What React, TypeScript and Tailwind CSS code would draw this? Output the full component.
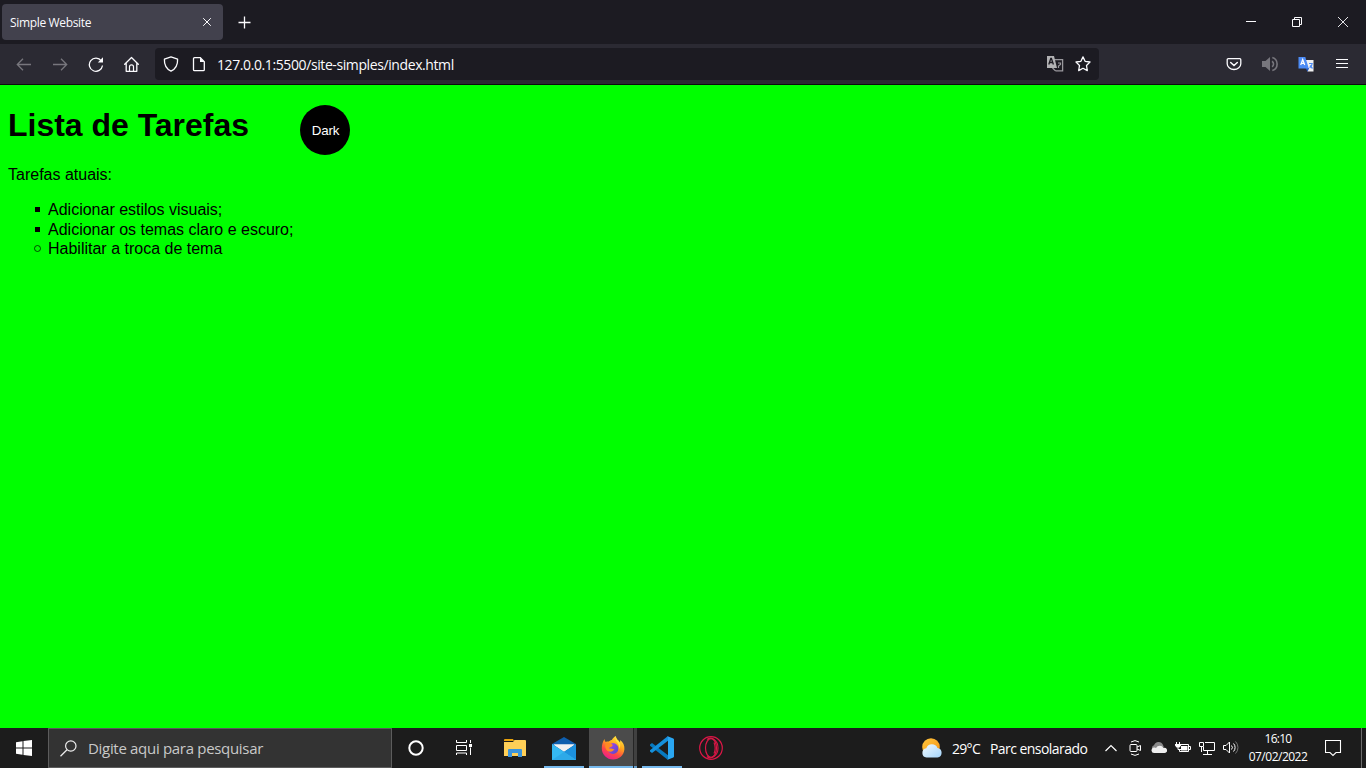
import type { ReactNode } from "react";

const UI = "font-['Open_Sans','Noto_Sans',sans-serif]";

function Icon({ w = 16, h = 16, children, className = "" }: { w?: number; h?: number; children: ReactNode; className?: string }) {
  return (
    <svg width={w} height={h} viewBox={`0 0 ${w} ${h}`} fill="none" stroke="currentColor" className={`shrink-0 ${className}`}>
      {children}
    </svg>
  );
}

function ToolButton({ label, dim, children }: { label: string; dim?: boolean; children: ReactNode }) {
  return (
    <button aria-label={label} className={`flex h-10 w-9 items-center justify-center ${dim ? "text-[#77767d]" : "text-[#fbfbfe]"}`}>
      {children}
    </button>
  );
}

function TabStrip() {
  return (
    <div className="flex h-11 bg-[#1c1b22] text-[#fbfbfe]">
      <div className="mt-1 ml-0.5 flex h-9 w-[221px] items-center justify-between rounded bg-[#42414d] pr-[11px] pl-2">
        <span className="pt-0.5 text-[12px] tracking-[-0.34px] whitespace-nowrap">Simple Website</span>
        <Icon w={10} h={10}><path d="M1.200 1.200l7.600 7.600M8.800 1.200l-7.600 7.600" strokeWidth="1" /></Icon>
      </div>
      <div className="ml-[15px] flex h-11 items-center pt-px">
        <Icon w={13} h={13}><path d="M6.500 .5v12M.5 6.500h12" strokeWidth="1.300" /></Icon>
      </div>
      <div className="ml-auto flex">
        <div className="flex h-11 w-[46px] items-center justify-center"><Icon w={10} h={10}><path d="M0 4.500h10" /></Icon></div>
        <div className="flex h-11 w-[46px] items-center justify-center"><Icon w={10} h={10}><path d="M.5 2.500h7v7h-7zM2.500 2.500v-2h7v7h-2" /></Icon></div>
        <div className="flex h-11 w-[46px] items-center justify-center"><Icon w={10} h={10}><path d="M0 0l10 10M10 0L0 10" strokeWidth=".9" /></Icon></div>
      </div>
    </div>
  );
}

function Toolbar() {
  return (
    <div className="flex h-[41px] border-b border-[#0c0c0d] bg-[#2b2a33] pr-1.5 pl-1.5">
      <ToolButton label="Voltar" dim><Icon><path d="M15 8.500H1.500M7 2.800L1.300 8.500L7 14.200" strokeWidth="1.300" /></Icon></ToolButton>
      <ToolButton label="Avançar" dim><Icon><path d="M1 8.500h13.500M9 2.800l5.700 5.700L9 14.200" strokeWidth="1.300" /></Icon></ToolButton>
      <ToolButton label="Atualizar">
        <Icon>
          <path d="M13.300 4.800A6.600 6.600 0 1 0 14.500 9.500" strokeWidth="1.300" />
          <path d="M15 1.300v5.200H9.800z" fill="currentColor" stroke="none" />
        </Icon>
      </ToolButton>
      <ToolButton label="Início">
        <Icon>
          <path d="M.7 8.200L7.500 1.500l6.800 6.700M2.200 7v8.300h10.600V7" strokeWidth="1.300" strokeLinejoin="round" strokeLinecap="round" />
          <path d="M5.500 15v-4.200a2 2 0 0 1 4 0V15" strokeWidth="1.200" />
        </Icon>
      </ToolButton>
      <div className="mt-1 ml-[5px] flex h-8 w-[944px] items-center rounded bg-[#1c1b22] pr-2 pl-2 text-[#fbfbfe]">
        <Icon><path d="M8 .8L14.600 3.200c.3 5.900-1.600 9.400-6.600 12C3 12.600 1.100 9.100 1.400 3.200z" strokeWidth="1.300" strokeLinejoin="round" /></Icon>
        <Icon w={14} h={16} className="ml-[13px]">
          <path d="M2.500 1.700h5.800l4 4v8a1 1 0 0 1-1 1H2.500a1 1 0 0 1-1-1v-11a1 1 0 0 1 1-1z" strokeWidth="1.300" />
          <path d="M8 1.700v4.300h4.500z" fill="currentColor" stroke="none" />
        </Icon>
        <span className="ml-[11px] pt-px text-[14px] tracking-[-0.4px] whitespace-nowrap">127.0.0.1:5500/site-simples/index.html</span>
        <Icon w={18} h={18} className="mr-[11px] ml-auto text-[#99989d]">
          <path d="M8 4.600h8.600v11.300H9.500M6.500 13l3 2.900" strokeWidth="1.300" />
          <path d="M1 1h7l3 12H1z" fill="#b1b1b3" stroke="none" />
          <path d="M2.800 9.500l2-6h.6l2 6M3.600 7.500h3" stroke="#1c1b22" strokeWidth="1.300" />
          <path d="M12 8h2.500v1.500l-2 1.500v2" strokeWidth="1.200" />
        </Icon>
        <Icon><path d="M8 .9l2.100 4.400 4.900.7-3.500 3.500.8 5.100L8 12.300l-4.300 2.300.8-5.100L1 6l4.900-.7z" strokeWidth="1.300" strokeLinejoin="round" /></Icon>
      </div>
      <div className="ml-auto flex">
        <ToolButton label="Pocket"><Icon><path d="M2.200 2.700h11.600a1 1 0 0 1 1 1v4a6.800 5.800 0 0 1-13.600 0v-4a1 1 0 0 1 1-1z" strokeWidth="1.300" /><path d="M4.700 6.500L8 9.500l3.300-3" strokeWidth="1.500" strokeLinecap="round" /></Icon></ToolButton>
        <ToolButton label="Som" dim>
          <Icon>
            <path d="M0 5h3.500L8 1v14l-4.500-4H0z" fill="currentColor" stroke="none" />
            <path d="M10 5.200a3.300 3.300 0 0 1 0 5.600M10.300 1.500a6.800 6.800 0 0 1 0 13" strokeWidth="1.600" />
          </Icon>
        </ToolButton>
        <ToolButton label="Traduzir">
          <Icon>
            <path d="M7 4h8.500v11.500H9.500z" fill="#f1f1f1" stroke="none" />
            <path d="M7.500 12h3.700L9.500 15.800z" fill="#2458bf" stroke="none" />
            <path d="M.5 1h6.800l3.500 11.500H.5z" fill="#4c8bf5" stroke="none" />
            <path d="M2.700 9l2-5.500L6.700 9M3.300 7.300h2.800" stroke="#fff" strokeWidth="1.200" />
            <path d="M11 7.500h3.200c0 2-1.700 3.500-2.600 4.300M12 9.500l2.500 3" stroke="#4c8bf5" strokeWidth="1.200" />
          </Icon>
        </ToolButton>
        <ToolButton label="Menu"><Icon w={12} h={10}><path d="M0 .5h12M0 4.500h12M0 8.500h12" strokeWidth="1.200" /></Icon></ToolButton>
      </div>
    </div>
  );
}

function Task({ done, children }: { done?: boolean; children: ReactNode }) {
  return (
    <li className="flex items-center">
      <span className={done ? "mr-2 ml-[27px] size-[5px] bg-black" : "mr-[7px] ml-[26px] size-[7px] rounded-full border border-black/70"} />
      {children}
    </li>
  );
}

function TaskPage() {
  return (
    <main className="min-h-0 flex-1 bg-[#00ff00] pl-2 font-['Liberation_Sans',Arial,sans-serif] text-[16px] leading-[19.5px] text-black">
      <div className="flex pt-5">
        <h1 className="w-[292px] pt-[2px] text-[32px] leading-[37px] font-bold tracking-[-0.02px] whitespace-nowrap">Lista de Tarefas</h1>
        <button className="size-[50px] rounded-full bg-black pt-px pl-px text-[13.333px] tracking-[-0.2px] text-white">Dark</button>
      </div>
      <p className="mt-[11px] leading-[18px]">Tarefas atuais:</p>
      <ul className="mt-4">
        <Task done>Adicionar estilos visuais;</Task>
        <Task done>Adicionar os temas claro e escuro;</Task>
        <Task>Habilitar a troca de tema</Task>
      </ul>
    </main>
  );
}

function AppButton({ open, children }: { open?: boolean; children: ReactNode }) {
  return (
    <div className="flex h-10 w-[49px] flex-col items-center">
      <div className="flex h-[38px] items-center pt-0.5">{children}</div>
      {open && <div className="h-0.5 w-10 bg-[#76b9ed]" />}
    </div>
  );
}

function Firefox() {
  return (
    <Icon w={24} h={24}>
      <defs>
        <linearGradient id="fx" x1=".8" y1="0" x2=".3" y2="1"><stop stopColor="#fff044" /><stop offset=".4" stopColor="#ffa31c" /><stop offset=".7" stopColor="#ff4846" /><stop offset="1" stopColor="#e91b91" /></linearGradient>
        <linearGradient id="fg" x1="0" y1="0" x2="1" y2="1"><stop stopColor="#aa45ed" /><stop offset="1" stopColor="#5748c7" /></linearGradient>
      </defs>
      <path d="M3.500 3c.1 1.600.6 2.300 1.300 3 1-.5 2.200-.6 3-.4 1.800-1.600 3-1.500 3-1.500 1-1.700 2.300-3.400 4-4.100.4 3 2.300 4.200 3.500 5.700l.6 1c.4-.7.3-1.900 0-2.700 3.300 1.900 4.800 5.400 4.500 9.200-.5 6-5.300 10.300-11.300 10.300C5.800 23.500.8 18.500.8 12.500.8 8.800 1.800 5.500 3.500 3z" fill="url(#fx)" stroke="none" />
      <circle cx="12" cy="12.500" r="5.400" fill="url(#fg)" stroke="none" />
      <path d="M4.500 7.800c2.300-1.100 4.900-1.300 6.600.4 1 .9.500 2.400-1.300 2.700-1 .2-1.700.8-1.800 1.700 2.300-.7 3.400.8 5.500.5-1.600 2.700-4.300 3.200-7 1.800-2-1.700-2.900-4.300-2-7.100z" fill="#ff8a22" stroke="none" />
      <path d="M14.800.5c-.7 2.800.2 4.600 1.800 6.500 1.800 2.200 1.600 4.300 1 6.700 2.200-2.800 2.300-6.600-.3-9.100C16 3.300 15 2.300 14.800.5z" fill="#ffe33f" stroke="none" />
    </Icon>
  );
}

function Taskbar() {
  return (
    <footer className={`flex h-10 shrink-0 bg-[#1c1c1c] text-white ${UI}`}>
      <div className="flex w-12 items-center justify-center">
        <Icon><path d="M0 2.200L6.500 1.300v6.200H0zM7.500 1.100L16 0v7.500H7.500zM0 8.500h6.500v6.200L0 13.800zM7.500 8.500H16V16l-8.500-1.100z" fill="#fff" stroke="none" /></Icon>
      </div>
      <div className="flex w-[344px] items-center border border-[#5c5c5c] bg-[#333] pl-[11px] text-[#c9c9c9]">
        <Icon w={17} h={17} className="text-[#eee]"><circle cx="10.800" cy="6" r="5.200" strokeWidth="1.200" /><path d="M7 9.800L.5 16.300" strokeWidth="1.300" /></Icon>
        <span className="ml-[11px] text-[15px] tracking-[-0.31px] whitespace-nowrap">Digite aqui para pesquisar</span>
      </div>
      <div className="flex w-12 items-center justify-center"><Icon><circle cx="8" cy="8" r="6.700" strokeWidth="2" /></Icon></div>
      <div className="flex w-12 items-center justify-center">
        <Icon w={16} h={16}><path d="M.5 0v2.500h10V0M.5 5.500h10v5H.5zM.5 15v-2h10v2M14.500 0v3M14.500 7.500V15" /><path d="M13 4h3v3h-3z" fill="#fff" stroke="none" /></Icon>
      </div>
      <div className="ml-0.5 flex">
        <AppButton>
          <Icon w={22} h={18}>
            <path d="M0 1a1 1 0 0 1 1-1h8l1 2H0z" fill="#e8a20c" stroke="none" />
            <path d="M0 3h9l1.500-2H21a1 1 0 0 1 1 1v15H0z" fill="#ffcf57" stroke="none" />
            <path d="M4 18v-7a1 1 0 0 1 1-1h12a1 1 0 0 1 1 1v7h-4v-4H8v4z" fill="#3c94db" stroke="none" />
          </Icon>
        </AppButton>
        <AppButton open>
          <Icon w={24} h={23}>
            <path d="M0 7L12 0l12 7v4H0z" fill="#0f5fae" stroke="none" />
            <path d="M1.500 7.500h21L12 15z" fill="#f2f2f2" stroke="none" />
            <path d="M0 7l12 7.500L24 7v16H0z" fill="#1c91dd" stroke="none" />
            <path d="M0 7l24 16H0z" fill="#35b8f1" stroke="none" />
            <path d="M12 15L0 23h24z" fill="#2da9e8" stroke="none" />
            <path d="M1.500 7.500h21L12 14.500z" fill="#f2f2f2" stroke="none" />
          </Icon>
        </AppButton>
        <div className="flex w-[49px] pl-px">
          <div className="flex w-11 flex-col items-center bg-[#4b4b4b]">
            <div className="flex h-[38px] items-center pt-0.5 pl-[3px]"><Firefox /></div>
            <div className="h-0.5 w-full bg-[#76b9ed]" />
          </div>
          <div className="flex w-1 flex-col border-l border-[#252525] bg-[#404040]"><div className="mt-auto h-0.5 bg-[#659dca]" /></div>
        </div>
        <AppButton open>
          <Icon w={24} h={24}>
            <path d="M0 8.500L2 7l16 12.200V24L0 9.800z" fill="#0879bf" stroke="none" />
            <path d="M0 15.500L2 17 18 4.800V0L0 14.200z" fill="#1590dc" stroke="none" />
            <path d="M17 0l6.300 2.600c.4.200.7.500.7 1v16.800c0 .5-.3.800-.7 1L17 24c.7-.3 1-.7 1-1.500v-21c0-.8-.3-1.200-1-1.500z" fill="#2aa7f2" stroke="none" />
          </Icon>
        </AppButton>
        <AppButton>
          <Icon w={24} h={24} className="text-[#dc1747]"><circle cx="12" cy="12" r="11.300" strokeWidth="1.200" /><ellipse cx="12" cy="12" rx="5.500" ry="9.300" strokeWidth="1.200" /><path d="M8 3.500C12 0 19 4 19 12s-7 12-11 8.500M15 6.500c1.500 3.500 1.500 7.500 0 11" strokeWidth="1.100" /></Icon>
        </AppButton>
      </div>
      <div className="ml-auto flex items-center">
        <Icon w={22} h={22}>
          <defs>
            <linearGradient id="sun" x1="0" y1="0" x2="1" y2="1"><stop stopColor="#ffc83f" /><stop offset="1" stopColor="#f7900f" /></linearGradient>
            <linearGradient id="cloud" x1="0" y1="0" x2="1" y2="1"><stop stopColor="#f2faff" /><stop offset="1" stopColor="#a4d4fa" /></linearGradient>
          </defs>
          <circle cx="10" cy="10" r="8.800" fill="url(#sun)" stroke="none" />
          <path d="M5.500 20.500a4.700 4.700 0 0 1-.2-9.300A6 6 0 0 1 16.500 11a4.800 4.800 0 0 1 0 9.500z" fill="url(#cloud)" stroke="none" />
        </Icon>
        <span className="ml-[9px] w-[38px] pt-px text-[14px] tracking-[-0.7px] whitespace-nowrap">29°C</span>
        <span className="w-[100px] pt-px text-[14px] tracking-[-0.55px] whitespace-nowrap">Parc ensolarado</span>
        <Icon w={12} h={8} className="ml-[15px]"><path d="M.5 7L6 1.500 11.500 7" strokeWidth="1.200" /></Icon>
        <div className="ml-[10px] flex gap-2">
          <Icon><path d="M4 4.500h5a1 1 0 0 1 1 1v5a1 1 0 0 1-1 1H4a1 1 0 0 1-1-1v-5a1 1 0 0 1 1-1zM10 7l3.500-1.500v5L10 9M4 2Q8-.8 12 2M4 14Q8 16.800 12 14" /></Icon>
          <Icon><path d="M2 10.500a3 3 0 0 1 1-5.200A4.800 4.800 0 0 1 12 5l1 2.500z" fill="#8a8a8a" stroke="none" /><path d="M3 13a2.700 2.700 0 0 1-.8-5.200c1.400-.5 2.500 0 2.800.2A4.200 4.200 0 0 1 12.500 8 2.600 2.600 0 1 1 13.500 13z" fill="#eee" stroke="none" /></Icon>
          <Icon><path d="M6 4.500h7.500v7h-9V10M14 6.500h1.500v3H14M1.500 2v2M4.500 2v2M3 7v2.500h3" /><path d="M0 4h6v1.500L4.500 7.500h-3L0 5.500zM6 6h6.500v4.500H6z" fill="#fff" stroke="none" /></Icon>
          <Icon><path d="M6 2.500h9.500v8H4.500V7M8.500 10.500v4M4 14.500h9M.5 2.500h4v4h-4zM2.500 6.500V12" /></Icon>
          <Icon><path d="M.5 5.500H3L6.500 2v11L3 9.500H.5z" /><path d="M8.500 5.500a3 3 0 0 1 0 4M10.500 3.500a5.800 5.800 0 0 1 0 8" /><path d="M12.500 1.500a8.500 8.500 0 0 1 0 12" stroke="#777" /></Icon>
        </div>
        <div className="ml-[8px] flex w-[62px] flex-col items-center text-[12px] leading-[18px] whitespace-nowrap">
          <span className="tracking-[-0.75px]">16:10</span>
          <span className="tracking-[-0.5px]">07/02/2022</span>
        </div>
        <Icon w={17} h={18} className="ml-[16px]"><path d="M.5 1.500h15v12H11L8 16.500 5 13.500H.5z" strokeWidth="1.100" /></Icon>
        <div className="ml-[19px] h-10 w-[5px] border-l border-[#6b6b6b]" />
      </div>
    </footer>
  );
}

export default function App() {
  return (
    <div className={`flex h-[768px] w-[1366px] flex-col overflow-hidden bg-[#1c1b22] ${UI}`}>
      <TabStrip />
      <Toolbar />
      <TaskPage />
      <Taskbar />
    </div>
  );
}
